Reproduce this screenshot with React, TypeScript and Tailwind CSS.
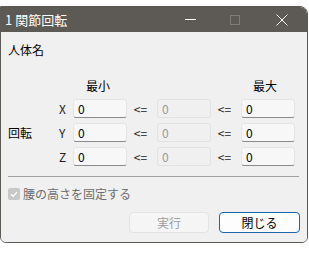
import React from 'react';

const font = { fontFamily: '"Noto Sans CJK JP", "Noto Sans", sans-serif' };

const Field: React.FC<{ disabled?: boolean }> = ({ disabled }) => (
  <div
    className={`w-[54px] h-[19px] rounded-[3px] flex items-center pl-[4px] text-[12px] leading-none ${
      disabled
        ? 'bg-[#f0f0f0] border border-[#e2e2e2] text-[#9a9a9a]'
        : 'bg-[#f7f7f7] border border-[#e5e5e5] border-b-[#8a8a8a] text-black'
    }`}
  >
    0
  </div>
);

const Row: React.FC<{ axis: string }> = ({ axis }) => (
  <div className="flex items-center h-[19px] leading-[16px]">
    <span className="w-[14px] text-[12px] text-[#222]">{axis}</span>
    <Field />
    <span className="w-[30px] text-center text-[12px] text-[#222] pr-[3px]">&lt;=</span>
    <Field disabled />
    <span className="w-[30px] text-center text-[12px] text-[#222] pr-[3px]">&lt;=</span>
    <Field />
  </div>
);

const App: React.FC = () => {
  return (
    <div className="w-[309px] h-[254px] bg-white overflow-hidden" style={font}>
      <div className="mt-[6px] w-[308px] h-[237px] flex flex-col rounded-tr-[8px] rounded-b-[6px] border border-[#5d5955] overflow-hidden">
        {/* title bar */}
        <div className="h-[25px] bg-[#5d5955] flex items-center text-white shrink-0">
          <span className="pl-[4px] text-[13px] leading-none">1 関節回転</span>
          <div className="ml-auto flex items-center">
            <svg width="46" height="25" viewBox="0 0 46 25">
              <line x1="16" y1="12.5" x2="27" y2="12.5" stroke="white" strokeWidth="1" />
            </svg>
            <svg width="46" height="25" viewBox="0 0 46 25">
              <rect x="15.5" y="8.5" width="9" height="9" fill="none" stroke="#807b77" strokeWidth="1" />
            </svg>
            <svg width="46" height="25" viewBox="0 0 46 25">
              <path d="M15.5 7.5 L26.5 18.5 M26.5 7.5 L15.5 18.5" stroke="white" strokeWidth="1" />
            </svg>
          </div>
        </div>

        {/* body */}
        <div className="flex-1 bg-[#f0f0f0] flex flex-col px-[7px] pt-[10px] leading-[16px]">
          <div className="text-[12px] leading-[16px] text-black">人体名</div>

          <div className="flex mt-[20px] text-[12px] leading-[16px] text-black">
            <span className="ml-[78px]">最小</span>
            <span className="ml-[143px]">最大</span>
          </div>

          <div className="flex items-center mt-[5px]">
            <span className="w-[51px] text-[12px] text-black">回転</span>
            <div className="flex flex-col gap-[5px]">
              <Row axis="X" />
              <Row axis="Y" />
              <Row axis="Z" />
            </div>
          </div>

          <div className="h-px bg-[#a0a0a0] mt-[10px] mr-[1px]" />

          <label className="flex items-center mt-[9px] gap-[3px] h-[16px]">
            <span className="w-[12px] h-[12px] rounded-[2px] bg-[#c8c8c8] flex items-center justify-center">
              <svg width="10" height="10" viewBox="0 0 10 10">
                <path d="M2 5.2 L4.2 7.3 L8 3" fill="none" stroke="white" strokeWidth="1.2" />
              </svg>
            </span>
            <span className="text-[12px] leading-[16px] text-[#6d6d6d]">腰の高さを固定する</span>
          </label>

          <div className="flex justify-end gap-[10px] mt-[10px]">
            <button className="w-[80px] h-[21px] rounded-[4px] bg-[#f5f5f5] border border-[#e4e4e4] text-[12px] text-[#9d9d9d] leading-none">
              実行
            </button>
            <button className="w-[81px] h-[21px] rounded-[4px] bg-[#fdfdfd] border border-[#1e64a8] text-[12px] text-black leading-none">
              閉じる
            </button>
          </div>
        </div>
      </div>
    </div>
  );
};

export default App;
